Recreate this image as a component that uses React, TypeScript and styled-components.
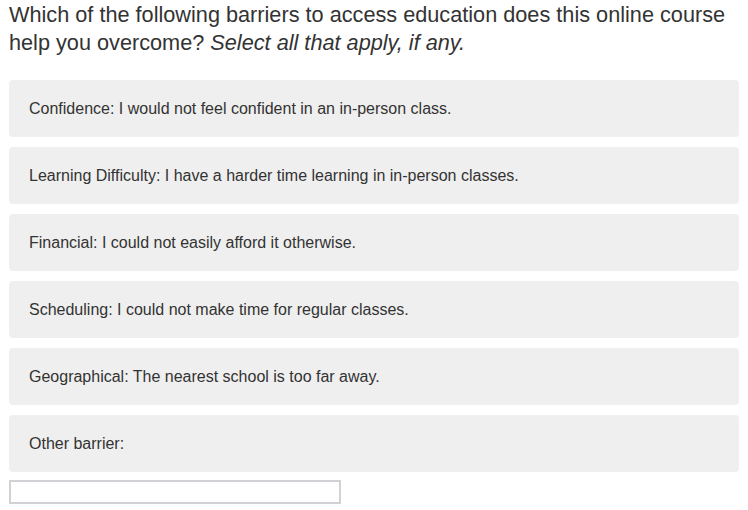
import React from "react";
import styled, { createGlobalStyle } from "styled-components";

const Global = createGlobalStyle`
  html, body { margin: 0; padding: 0; background: #fff; }
  body { font-family: "Liberation Sans", Arial, sans-serif; color: #333; }
`;

const Page = styled.div`
  padding: 1px 9px 0 9px;
  width: 730px;
`;

const Question = styled.h1`
  margin: 0 0 23px 0;
  font-size: 21.7px;
  line-height: 28px;
  font-weight: normal;
  color: #333;
`;

const Hint = styled.em`
  font-style: italic;
`;

const Options = styled.div`
  display: flex;
  flex-direction: column;
  gap: 10px;
`;

const Option = styled.label`
  display: flex;
  align-items: center;
  height: 57px;
  box-sizing: border-box;
  padding: 0 20px;
  background: #efefef;
  border-radius: 4px;
  font-size: 16px;
  color: #333;
`;

const TextInput = styled.input`
  margin-top: 8px;
  width: 332px;
  height: 24px;
  box-sizing: border-box;
  border: 2px solid #d2d2d6;
  border-radius: 0;
  background: #fff;
  display: block;
`;

const options = [
  "Confidence: I would not feel confident in an in-person class.",
  "Learning Difficulty: I have a harder time learning in in-person classes.",
  "Financial: I could not easily afford it otherwise.",
  "Scheduling: I could not make time for regular classes.",
  "Geographical: The nearest school is too far away.",
  "Other barrier:",
];

export default function App() {
  return (
    <Page>
      <Global />
      <Question>
        Which of the following barriers to access education does this online course help you overcome?{" "}
        <Hint>Select all that apply, if any.</Hint>
      </Question>
      <Options>
        {options.map((o) => (
          <Option key={o}>{o}</Option>
        ))}
      </Options>
      <TextInput type="text" />
    </Page>
  );
}
